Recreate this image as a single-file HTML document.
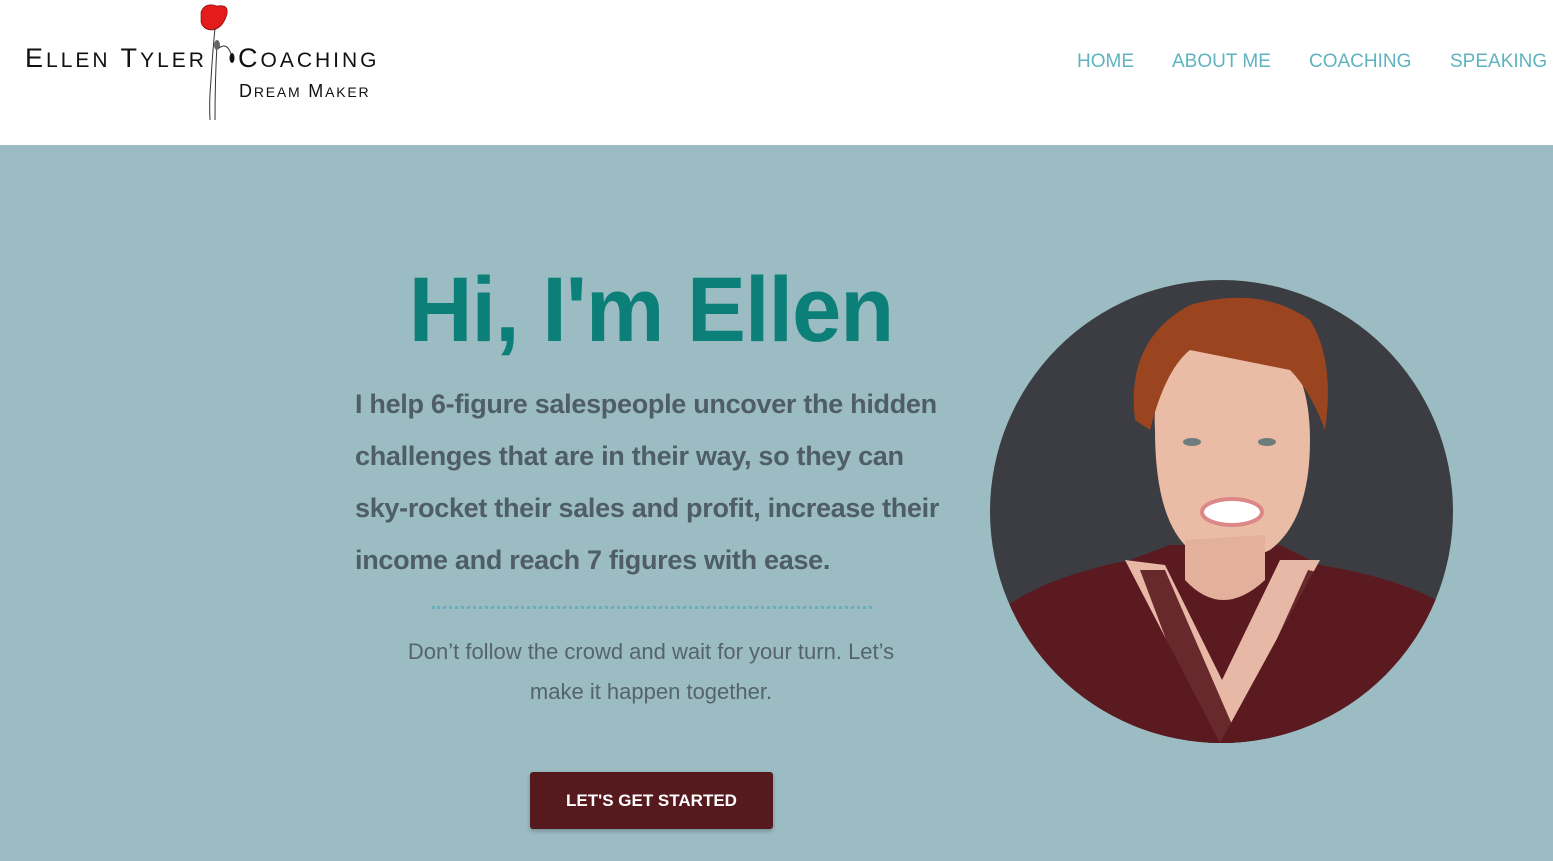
<!DOCTYPE html>
<html><head><meta charset="utf-8"><style>
*{margin:0;padding:0;box-sizing:border-box}
body{width:1553px;height:861px;overflow:hidden;font-family:"Liberation Sans",sans-serif;background:#9bbcc3;position:relative}
.hdr{position:absolute;left:0;top:0;width:1553px;height:145px;background:#fff}
.nav a{position:absolute;top:51px;font-size:19px;color:#5fb3bf;text-decoration:none}
.logo{position:absolute;font-family:"Liberation Sans",sans-serif;color:#111;letter-spacing:3px;white-space:nowrap}
h1{position:absolute;left:300px;width:702px;text-align:center;top:258px;font-size:92px;font-weight:bold;color:#0c7f78;letter-spacing:-1px;transform:scaleX(0.96)}
.p{position:absolute;left:355px;top:378px;width:700px;font-size:27px;font-weight:bold;color:#4f5d66;line-height:52px;letter-spacing:-0.3px;white-space:nowrap}
.dots{position:absolute;left:432px;top:606px;width:440px;border-top:3px dotted #5fb3bf}
.q{position:absolute;left:300px;width:702px;top:632px;text-align:center;font-size:22px;color:#56636b;line-height:40px}
.btn{position:absolute;left:530px;top:772px;width:243px;height:57px;background:#561a1e;color:#fff;font-weight:bold;font-size:17px;text-align:center;line-height:57px;border-radius:3px;box-shadow:0 2px 4px rgba(0,0,0,.25)}
</style></head><body>
<div class="hdr">
<div class="logo" style="left:25px;top:43px;font-size:27px">E<span style="font-size:21px">LLEN</span> T<span style="font-size:21px">YLER</span></div>
<div class="logo" style="left:238px;top:43px;font-size:27px">C<span style="font-size:21px">OACHING</span></div>
<div class="logo" style="left:239px;top:81px;font-size:18px;letter-spacing:1.8px">D<span style="font-size:14px">REAM</span> M<span style="font-size:14px">AKER</span></div>
<svg style="position:absolute;left:195px;top:0" width="45" height="125">
<path d="M6 12 Q10 2 22 6 Q34 4 32 14 Q28 28 18 30 Q8 30 6 22 Z" fill="#e31b1b" stroke="#700" stroke-width=".6"/>
<path d="M20 28 Q17 60 16 80 Q14 100 15 120" stroke="#333" fill="none" stroke-width="1"/>
<path d="M22 44 Q20 80 20 120" stroke="#333" fill="none" stroke-width="1"/>
<ellipse cx="22" cy="45" rx="3" ry="5" fill="#666"/>
<ellipse cx="37" cy="58" rx="2.5" ry="5" fill="#111"/>
<path d="M24 48 Q32 42 36 54" stroke="#333" fill="none"/>
</svg>
<div class="nav"><a style="left:1077px">HOME</a><a style="left:1172px">ABOUT ME</a><a style="left:1309px">COACHING</a><a style="left:1450px">SPEAKING</a></div>
</div>
<h1>Hi, I'm Ellen</h1>
<div class="p">I help 6-figure salespeople uncover the hidden<br>challenges that are in their way, so they can<br>sky-rocket their sales and profit, increase their<br>income and reach 7 figures with ease.</div>
<div class="dots"></div>
<div class="q">Don’t follow the crowd and wait for your turn. Let’s<br>make it happen together.</div>
<div class="btn">LET'S GET STARTED</div>
<svg style="position:absolute;left:990px;top:280px" width="463" height="463" viewBox="0 0 463 463">
<defs><clipPath id="c"><circle cx="231.5" cy="231.5" r="231.5"/></clipPath></defs>
<g clip-path="url(#c)">
<rect width="463" height="463" fill="#3c3d42"/>
<path d="M0 463 L0 340 Q40 300 140 280 L180 265 L290 265 L330 285 Q420 300 463 330 L463 463Z" fill="#5a1a1f"/>
<path d="M135 280 L230 463 L330 280 L290 280 L232 400 L175 285Z" fill="#e7b8a6"/>
<path d="M150 290 L215 463 L250 463 L175 290Z" fill="#5a1a1f" opacity=".9"/>
<path d="M318 290 L240 463 L275 463 L340 295Z" fill="#5a1a1f" opacity=".9"/>
<path d="M165 150 Q160 60 230 40 Q320 50 320 160 Q320 240 280 270 Q240 290 200 270 Q165 240 165 150Z" fill="#eabba5"/>
<path d="M195 260 L195 300 Q232 340 275 300 L275 255Z" fill="#e2b09b"/>
<path d="M145 140 Q135 60 200 25 Q270 5 320 40 Q345 80 335 150 Q320 110 300 90 Q250 80 200 70 Q175 90 160 150Z" fill="#9a4520"/>
<ellipse cx="242" cy="232" rx="30" ry="13" fill="#fff" stroke="#d88" stroke-width="4"/>
<ellipse cx="202" cy="162" rx="9" ry="4" fill="#6d7d7d"/>
<ellipse cx="277" cy="162" rx="9" ry="4" fill="#6d7d7d"/>
</g></svg>
</body></html>
